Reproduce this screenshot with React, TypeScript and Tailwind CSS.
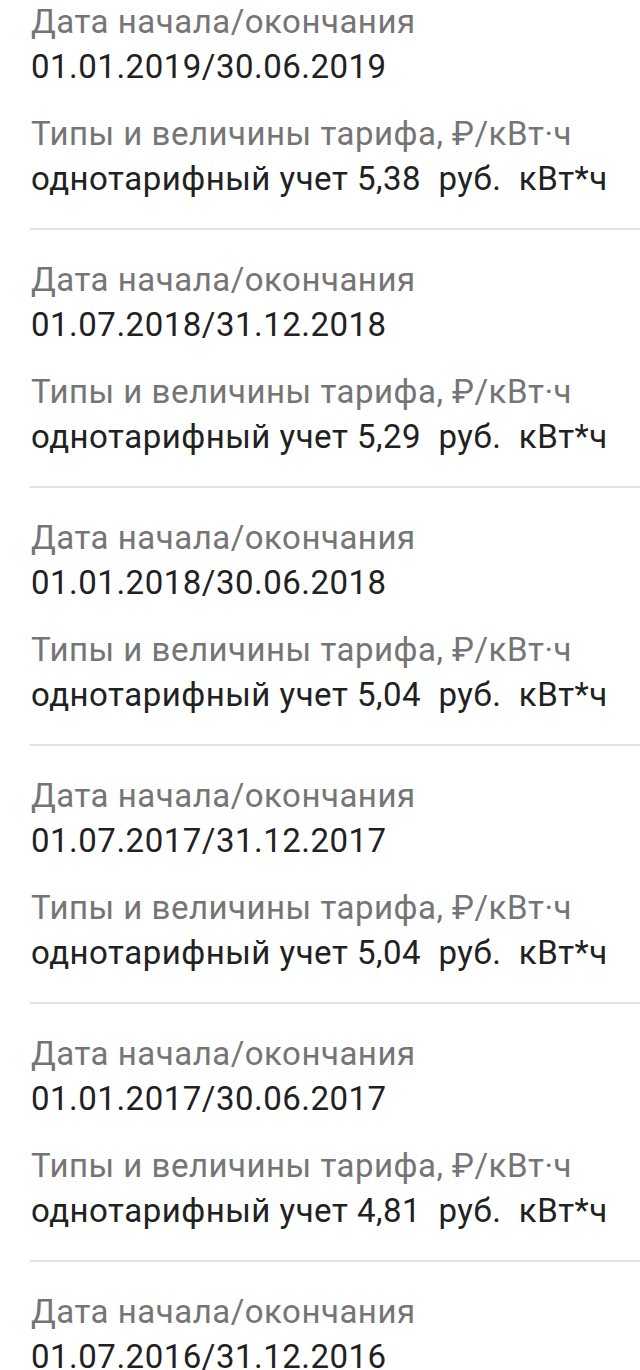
const tariffs = [
  { period: "01.01.2019/30.06.2019", price: "5,38" },
  { period: "01.07.2018/31.12.2018", price: "5,29" },
  { period: "01.01.2018/30.06.2018", price: "5,04" },
  { period: "01.07.2017/31.12.2017", price: "5,04" },
  { period: "01.01.2017/30.06.2017", price: "4,81" },
  { period: "01.07.2016/31.12.2016", price: "4,81" },
];

export default function App() {
  return (
    <div className="h-[1370px] overflow-hidden bg-white font-['Roboto',sans-serif] text-[33px] leading-[45px] tracking-[0.5px]">
      <div className="ml-[30px]">
        {tariffs.map((t, i) => (
          <div
            key={i}
            className={`border-b-2 border-[#e2e2e2] pl-[1px] pb-[27px] ${i === 0 ? "-mt-[1px]" : "pt-[27px]"}`}
          >
            <div className="text-[#757575]">Дата начала/окончания</div>
            <div className="text-[#212121]">{t.period}</div>
            <div className="mt-[22px] text-[#757575]">Типы и величины тарифа, ₽/кВт·ч</div>
            <div className="text-[#212121] whitespace-pre">однотарифный учет {t.price}  руб.  кВт*ч</div>
          </div>
        ))}
      </div>
    </div>
  );
}
